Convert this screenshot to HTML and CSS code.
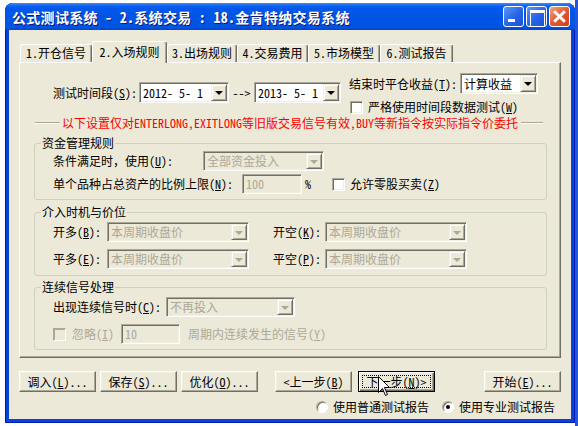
FILE: index.html
```html
<!DOCTYPE html>
<html lang="zh-CN">
<head>
    <meta charset="UTF-8">
    <title>公式测试系统</title>
    <link rel="stylesheet" href="styles.css">
</head>
<body>
    <div class="window">
        <div class="titlebar">
            <span class="title">公式测试系统 - 2.系统交易 : 18.金肯特纳交易系统</span>
            <div class="caption-buttons">
                <span class="cap-btn min"></span>
                <span class="cap-btn max"></span>
                <span class="cap-btn close"></span>
            </div>
        </div>

        <div class="client">
            <div class="tabs">
                <span class="tab t1">1.开仓信号</span>
                <span class="tab t2 active">2.入场规则</span>
                <span class="tab t3">3.出场规则</span>
                <span class="tab t4">4.交易费用</span>
                <span class="tab t5">5.市场模型</span>
                <span class="tab t6">6.测试报告</span>
            </div>

            <div class="panel">
                <div class="top-row">
                    <div class="dates">
                        <span class="lbl w86">测试时间段(<u>S</u>):</span>
                        <div class="field picker1"><span class="val">2012- 5- 1</span><span class="drop"></span></div>
                        <span class="arrow">--&gt;</span>
                        <div class="field picker2"><span class="val">2013- 5- 1</span><span class="drop"></span></div>
                    </div>
                    <div class="endcol">
                        <div class="line">
                            <span class="lbl w111">结束时平仓收益(<u>T</u>):</span>
                            <div class="field combo-end"><span class="val">计算收益</span><span class="drop"></span></div>
                        </div>
                        <div class="line second">
                            <span class="check"></span>
                            <span class="check-text">严格使用时间段数据测试(<u>W</u>)</span>
                        </div>
                    </div>
                </div>

                <div class="note">
                    <span class="rule left"></span>
                    <span class="note-text">以下设置仅对ENTERLONG,EXITLONG等旧版交易信号有效,BUY等新指令按实际指令价委托</span>
                    <span class="rule right"></span>
                </div>

                <fieldset class="group g1">
                    <legend>资金管理规则</legend>
                    <div class="row">
                        <span class="lbl w150">条件满足时，使用(<u>U</u>):</span>
                        <div class="field dis combo-fund"><span class="val">全部资金投入</span><span class="drop"></span></div>
                    </div>
                    <div class="row gap3">
                        <span class="lbl w189">单个品种占总资产的比例上限(<u>N</u>):</span>
                        <div class="field dis edit60"><span class="val">100</span></div>
                        <span class="pct">%</span>
                        <span class="check odd-lot"></span>
                        <span class="check-text">允许零股买卖(<u>Z</u>)</span>
                    </div>
                </fieldset>

                <fieldset class="group g2">
                    <legend>介入时机与价位</legend>
                    <div class="row first">
                        <span class="lbl w54">开多(<u>B</u>):</span>
                        <div class="field dis combo-price"><span class="val">本周期收盘价</span><span class="drop"></span></div>
                        <span class="lbl w52 short">开空(<u>K</u>):</span>
                        <div class="field dis combo-price"><span class="val">本周期收盘价</span><span class="drop"></span></div>
                    </div>
                    <div class="row gap7">
                        <span class="lbl w54">平多(<u>E</u>):</span>
                        <div class="field dis combo-price"><span class="val">本周期收盘价</span><span class="drop"></span></div>
                        <span class="lbl w52 short">平空(<u>P</u>):</span>
                        <div class="field dis combo-price"><span class="val">本周期收盘价</span><span class="drop"></span></div>
                    </div>
                </fieldset>

                <fieldset class="group g3">
                    <legend>连续信号处理</legend>
                    <div class="row first">
                        <span class="lbl w113">出现连续信号时(<u>C</u>):</span>
                        <div class="field dis combo-signal"><span class="val">不再投入</span><span class="drop"></span></div>
                    </div>
                    <div class="row gap7">
                        <span class="check dis"></span>
                        <span class="grey ignore">忽略(<u>I</u>)</span>
                        <div class="field dis edit59"><span class="val">10</span></div>
                        <span class="grey period">周期内连续发生的信号(<u>Y</u>)</span>
                    </div>
                </fieldset>
            </div>

            <div class="buttons">
                <span class="btn">调入(<u>L</u>)...</span>
                <span class="btn m4">保存(<u>S</u>)...</span>
                <span class="btn m4">优化(<u>O</u>)...</span>
                <span class="btn m17">&lt;上一步(<u>B</u>)</span>
                <span class="btn default m6">下一步(<u>N</u>)&gt;
                    <svg class="cursor" width="13" height="21" viewBox="0 0 13 21">
                        <path d="M0.5 0.5 L0.5 16.5 L4.5 12.5 L7.5 19.5 L9.5 18.5 L6.5 11.5 L11.5 11.5 Z" fill="#fff" stroke="#000" stroke-width="1"/>
                    </svg>
                </span>
                <span class="btn m49">开始(<u>E</u>)...</span>
            </div>

            <div class="radios">
                <span class="radio"></span>
                <span class="radio-text">使用普通测试报告</span>
                <span class="radio checked r2"></span>
                <span class="radio-text">使用专业测试报告</span>
            </div>
        </div>
    </div>
</body>
</html>
```

FILE: styles.css
```css
* {
    box-sizing: border-box;
}

body {
    margin: 0;
    width: 578px;
    height: 426px;
    overflow: hidden;
    background: linear-gradient(to right, #ffffff 575px, #2555d8 575px);
    font-family: "Noto Sans Mono CJK SC", "Noto Sans CJK SC", sans-serif;
    font-size: 12px;
    line-height: 14px;
    color: #000000;
}

u {
    text-decoration: underline;
    text-underline-offset: 1px;
}

/* Window frame */
.window {
    margin: 3px 0 0 5px;
    width: 570px;
    height: 420px;
    display: flex;
    flex-direction: column;
    background: #0842dc;
    border-radius: 8px 8px 0 0;
    padding: 0 4px 4px;
    box-shadow: inset 1px 0 0 #0019b0, inset -1px 0 0 #0019b0, inset 0 -1px 0 #0019b0;
}

.titlebar {
    height: 27px;
    margin: 0 -4px;
    padding: 0 5px 0 7px;
    display: flex;
    align-items: center;
    border-radius: 8px 8px 0 0;
    background: linear-gradient(#3f8ef8 0, #0b60f0 3px, #0058ea 6px, #0055e5 50%, #0054e2 88%, #0046cc 100%);
}

.title {
    color: #ffffff;
    font-size: 14px;
    line-height: 18px;
    font-weight: bold;
    letter-spacing: 0.3px;
    text-shadow: 1px 1px 0 #0a1883;
    white-space: pre;
    padding-top: 1px;
}

.caption-buttons {
    margin-left: auto;
    display: flex;
    gap: 2px;
}

.cap-btn {
    width: 21px;
    height: 21px;
    border: 1px solid #ffffff;
    border-radius: 3px;
    position: relative;
    background: linear-gradient(135deg, #5b97f8 0%, #2563e8 55%, #1c52d6 100%);
}

.min::after {
    content: "";
    position: absolute;
    left: 4px;
    bottom: 4px;
    width: 7px;
    height: 3px;
    background: #ffffff;
}

.max::after {
    content: "";
    position: absolute;
    left: 3px;
    top: 3px;
    width: 13px;
    height: 13px;
    border: 1px solid #ffffff;
    border-top-width: 3px;
}

.close {
    background: linear-gradient(135deg, #f3a488 0%, #e35a30 50%, #c9401b 100%);
}

.close::before,
.close::after {
    content: "";
    position: absolute;
    left: 8px;
    top: 2px;
    width: 3px;
    height: 15px;
    background: #ffffff;
    transform: rotate(45deg);
}

.close::after {
    transform: rotate(-45deg);
}

/* Client area */
.client {
    flex: 1;
    background: #ece9d8;
    padding: 11px 10px 0;
}

.tabs {
    display: flex;
    align-items: flex-end;
    height: 21px;
    padding-left: 1px;
}

.tab {
    height: 18px;
    border: 1px solid;
    border-bottom: none;
    border-color: #ffffff #716f64 transparent #ffffff;
    border-radius: 3px 3px 0 0;
    box-shadow: inset -1px 0 0 #aca899;
    text-align: center;
    line-height: 16px;
    white-space: nowrap;
}

.tab.active {
    height: 22px;
    margin-bottom: -1px;
    position: relative;
    z-index: 1;
    background: #ece9d8;
    line-height: 19px;
}

.t1 { width: 72px; }
.t2 { width: 75px; }
.t3 { width: 70px; }
.t4 { width: 71px; }
.t5 { width: 72px; }
.t6 { width: 73px; }

.panel {
    width: 542px;
    height: 296px;
    border: 1px solid;
    border-color: #ffffff #716f64 #716f64 #ffffff;
    box-shadow: inset -1px -1px 0 #aca899;
    padding: 10px 0 0 14px;
}

/* First row: test period and closing */
.top-row {
    display: flex;
    align-items: flex-start;
    margin-left: 19px;
}

.dates {
    display: flex;
    align-items: center;
    margin-top: 9px;
}

.lbl {
    white-space: nowrap;
}

.w86 { width: 86px; }
.w111 { width: 111px; }
.w150 { width: 150px; }
.w189 { width: 189px; }
.w54 { width: 54px; }
.w52 { width: 52px; }
.w113 { width: 113px; }

.arrow {
    width: 25px;
    text-align: center;
}

.endcol {
    margin-left: 8px;
}

.line {
    display: flex;
    align-items: center;
}

.line.second {
    margin-top: 6px;
    height: 14px;
    padding-left: 1px;
}

.check-text {
    margin-left: 5px;
    white-space: nowrap;
}

/* Sunken fields and combos */
.field {
    display: flex;
    align-items: stretch;
    height: 20px;
    padding: 1px;
    background: #ffffff;
    border: 1px solid;
    border-color: #aca899 #ffffff #ffffff #aca899;
    box-shadow: inset 1px 1px 0 #716f64, inset -1px -1px 0 #f1efe2;
}

.field .val {
    padding: 0 2px 0 2px;
    line-height: 16px;
    white-space: nowrap;
}

.field.dis {
    background: #ece9d8;
    color: #aca899;
}

.drop {
    margin-left: auto;
    width: 16px;
    display: flex;
    align-items: center;
    justify-content: center;
    background: #ece9d8;
    border: 1px solid;
    border-color: #f1efe2 #716f64 #716f64 #f1efe2;
    box-shadow: inset 1px 1px 0 #ffffff, inset -1px -1px 0 #aca899;
}

.drop::after {
    content: "";
    border: 4px solid transparent;
    border-top: 4px solid #000000;
    border-bottom: 0;
    margin-top: 1px;
}

.dis .drop::after {
    border-top-color: #aca899;
}

.picker1 { width: 90px; height: 21px; }
.picker2 { width: 87px; height: 21px; }
.picker1 .val, .picker2 .val { line-height: 17px; }
.combo-end { width: 78px; height: 21px; }
.combo-end .val { line-height: 17px; }
.combo-fund { width: 121px; }
.combo-price { width: 142px; }
.combo-signal { width: 129px; }
.edit60 { width: 60px; }
.edit59 { width: 59px; }

.check {
    width: 13px;
    height: 13px;
    background: #ffffff;
    border: 1px solid;
    border-color: #aca899 #ffffff #ffffff #aca899;
    box-shadow: inset 1px 1px 0 #716f64, inset -1px -1px 0 #f1efe2;
    flex-shrink: 0;
}

.check.dis {
    background: #ece9d8;
    box-shadow: inset 1px 1px 0 #aca899;
}

/* Red note */
.note {
    display: flex;
    align-items: center;
    height: 14px;
    margin: 2px 0 0 1px;
}

.rule {
    height: 2px;
    border-top: 1px solid #aca899;
    border-bottom: 1px solid #ffffff;
}

.rule.left { width: 25px; }
.rule.right { width: 22px; }

.note-text {
    color: #ff0000;
    margin: 0 3px 0 2px;
    white-space: nowrap;
}

/* Group boxes */
.group {
    width: 513px;
    margin: 0;
    padding: 0 0 5px 6px;
    border: 1px solid #d0d0bf;
    border-radius: 3px;
}

.group legend {
    padding: 0 1px;
    line-height: 16px;
}

.g1 { margin-top: 5px; }
.g2 { margin-top: 4px; padding-bottom: 6px; }
.g3 { margin-top: 3px; }

.row {
    display: flex;
    align-items: center;
    height: 20px;
    padding-left: 12px;
}

.row.first { margin-top: 2px; }
.row.gap3 { margin-top: 3px; }
.row.gap7 { margin-top: 7px; }

.short {
    margin-left: 24px;
}

.pct {
    margin-left: 3px;
}

.odd-lot {
    margin-left: 21px;
}

.grey {
    color: #aca899;
    white-space: nowrap;
}

.ignore {
    margin: 0 7px 0 6px;
}

.period {
    margin-left: 8px;
}

/* Bottom buttons */
.buttons {
    display: flex;
    margin-top: 13px;
}

.btn {
    position: relative;
    width: 77px;
    height: 21px;
    display: flex;
    align-items: center;
    justify-content: center;
    white-space: nowrap;
    background: #ece9d8;
    border: 1px solid;
    border-color: #ffffff #716f64 #716f64 #ffffff;
    box-shadow: inset -1px -1px 0 #aca899, inset 1px 1px 0 #f1efe2;
}

.btn.default {
    border-color: #000000;
    box-shadow: inset 1px 1px 0 #ffffff, inset -1px -1px 0 #716f64, inset -2px -2px 0 #aca899;
}

.btn.default::after {
    content: "";
    position: absolute;
    inset: 3px;
    border: 1px dotted #000000;
}

.m4 { margin-left: 4px; }
.m6 { margin-left: 6px; }
.m17 { margin-left: 17px; }
.m49 { margin-left: 49px; }

.cursor {
    position: absolute;
    left: 19px;
    top: 4px;
    z-index: 2;
}

/* Report type radios */
.radios {
    display: flex;
    align-items: center;
    justify-content: flex-end;
    height: 14px;
    margin: 8px 6px 0 0;
}

.radio {
    width: 12px;
    height: 12px;
    border-radius: 50%;
    background: #ffffff;
    border: 1px solid;
    border-color: #aca899 #ffffff #ffffff #aca899;
    box-shadow: inset 1px 1px 0 #716f64;
    display: flex;
    align-items: center;
    justify-content: center;
}

.radio.checked::after {
    content: "";
    width: 4px;
    height: 4px;
    border-radius: 50%;
    background: #000000;
}

.radio.r2 {
    margin-left: 13px;
}

.radio-text {
    margin-left: 5px;
    white-space: nowrap;
}
```
